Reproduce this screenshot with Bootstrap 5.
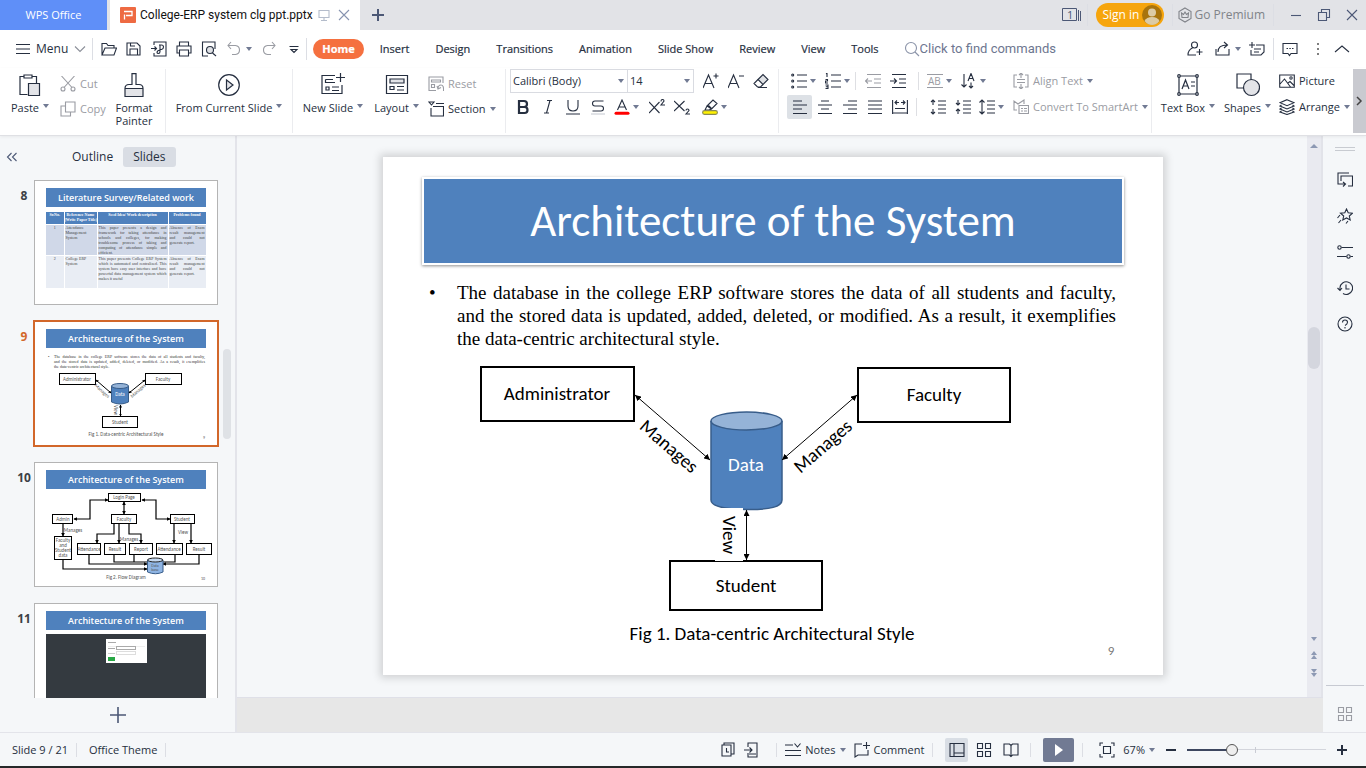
<!DOCTYPE html>
<html lang="en">
<head>
<meta charset="utf-8">
<meta name="viewport" content="width=device-width, initial-scale=1">
<title>College-ERP system clg ppt.pptx - WPS Office</title>
<link rel="stylesheet" href="https://cdn.jsdelivr.net/npm/bootstrap@5.3.0/dist/css/bootstrap.min.css">
<style>
:root{--ink:#262f40;--ink-soft:#9a9ca3;--line:#e3e4ea;--panel:#f5f7f9;--accent:#f5703f;--slide-blue:#4f81bd}
body{font:11px/16px "Open Sans","Noto Sans",sans-serif;color:var(--ink);background:var(--panel)}
button{font:inherit;color:inherit;background:none;border:0;padding:0}
svg{display:block;flex:none}
.ic{width:16px;height:16px;fill:none;stroke:currentColor;stroke-width:1.1}
.ic24{width:24px;height:24px;fill:none;stroke:currentColor;stroke-width:1.2}
.caret{width:0;height:0;flex:none;border:3px solid transparent;border-top:4px solid #717a93;border-bottom:0}
.muted-tool{color:var(--ink-soft)}
.soft{color:#4c5876}
.vline{width:1px;background:#dcdee4;flex:none}

.titlebar{height:30px;background:#e2e3e7}
.home-tab{width:107px;background:#5f8ff8;color:#fff}
.doc-tab{width:250px;margin-left:3px;background:#fff;padding:0 8px 0 10px;font:12px/16px Roboto,sans-serif;color:#111}
.new-tab{width:35px}
.signin{height:24px;border-radius:12px;background:#f6a50d;color:#fff;font-size:12px;padding:0 2px 0 6px;gap:3px}
.premium{font-size:12px;color:#808389;gap:1px}
.winbtn{width:28px;height:30px}

.menurow{height:38px;background:#fff}
.qat{gap:9px}
.menurow .vline,.titlebar .vline{height:22px}
.maintabs{margin-left:6px}
.maintabs a{color:var(--ink);text-decoration:none;padding:2px 13px;-webkit-text-stroke:.2px}
.maintabs a.active{background:var(--accent);color:#fff;font-weight:700;border-radius:10px;padding:2px 9px;margin-right:3px}
.findwrap{margin-left:12px}
.findbox{font:13px/18px Roboto,sans-serif;border:0;outline:0;width:160px;padding:0;color:#6d7690}
.findbox::placeholder{color:#6d7690;opacity:1}

.ribbon{height:68px;background:#fff;border-bottom:1px solid #dfe0e4;box-shadow:0 1px 3px #0000000f;position:relative;padding-top:1px}
.ribbon>.vline{height:64px;background:#ebecef}
.big{display:flex;flex-direction:column;align-items:center;gap:4px;padding-top:4px;line-height:13px}
.big .caption-row{display:flex;gap:4px;white-space:nowrap}
.big .caret{margin-top:3px}
.stack{padding-top:2px}
.stack button{display:flex;align-items:center;gap:4px;height:25px;white-space:nowrap}
.tools{gap:2px}
.tools>div{display:flex;align-items:center;height:24px}
.tb{width:25px;height:24px;display:flex;align-items:center;justify-content:center}
.tb.drop{width:34px;justify-content:flex-start;gap:3px;padding-left:4px}
.tb.on{background:#dde1e6;border-radius:2px}
.tools .vline{height:18px;background:#dedfe3}
.fontsel{height:24px;border:1px solid #d9dbe1;border-radius:0;background:#fff url("data:image/svg+xml,%3Csvg xmlns='http://www.w3.org/2000/svg' width='6' height='4'%3E%3Cpath d='M0 0h6L3 4z' fill='%23717a93'/%3E%3C/svg%3E") no-repeat right 3px center;appearance:none;font:inherit;color:var(--ink);padding:0 2px}
.fname{width:118px}.fsize{width:67px;margin-left:-1px}
.more{width:13px;height:64px;background:#c9cad0}

.side{width:237px;border-right:2px solid var(--line)}
.side-head{height:41px;font-size:12px}
.segs{margin-left:42px}
.seg{padding:2px 10px;border-radius:3px;line-height:16px}
.seg.on{background:#d9dde4;min-width:50px}
.thumbs{overflow:hidden;position:relative;padding-top:3px}
.thumb-row{display:flex;margin-bottom:16px;padding-left:14px}
.thumb-no{width:20px;padding-top:8px;text-align:center;font-weight:700;font-size:12px;color:#3c3f45}
.thumb{width:184px;height:125px;border:1px solid #b4b4b4;background:#fff;overflow:hidden;flex:none;font-family:Carlito,"Open Sans",sans-serif}
.picked .thumb{outline:2px solid #d2672a;outline-offset:-1px;border-color:#fff}
.picked .thumb-no{color:#d2672a}
.thumb h3{margin:7px 11px 0;height:19px;background:var(--slide-blue);color:#fff;font:600 9px/20px "Open Sans",sans-serif;text-align:center;white-space:nowrap}
.thumb svg text{text-anchor:middle;fill:#555;stroke:none}
.mini{margin:5px 11px 0;width:160px;border-collapse:collapse;table-layout:fixed;font:4px/5px "Liberation Serif",serif;color:#444}
.mini th,.mini td{border:1px solid #fff;border-width:0 1px 1px 0;padding:0 1px;vertical-align:top;text-align:justify}
.mini th{background:var(--slide-blue);color:#fff;text-align:center;height:12px;white-space:nowrap;padding:0}
.mini tr.a td{background:#d0d8e8;height:29px}.mini tr.b td{background:#e9edf4;height:33px}
.mini td:first-child{text-align:center}
.mini-text{margin:6px 12px 0 19px;font:4px/5px "Liberation Serif",serif;color:#333}
.mini-text div{text-align-last:justify}.mini-text div:last-child{text-align-last:left}
.mini-text::before{content:"•";position:absolute;margin-left:-6px}
.login-shot{margin:4px 11px 0;height:92px;background:#343a40;padding-top:5px}
.login-card{width:41px;height:24px;margin:auto;background:#fff;padding:2px}
.side-scroll{position:absolute;right:4px;top:172px;width:8px;height:90px;border-radius:4px;background:#dfe2e6}
.add{height:34px}

.stage{padding:21px 16px 0 18px}
.slide{width:100%;max-width:780px;background:#fff;box-shadow:0 0 8px 3px #00000026;color:#000}
.slide-title{margin:20px 39px 0;border:2px solid #fff;background:var(--slide-blue);box-shadow:0 1px 3px #00000073;color:#fff;font:45px/84px Carlito,"Open Sans",sans-serif;text-align:center}
.slide-body{margin:16px 47px 10px 74px;font:19px/23px "Liberation Serif",serif;text-align:justify}
.slide-body::before{content:"•";position:absolute;margin-left:-28px}
.diagram{width:100%;height:auto;font:19px Carlito,"Open Sans",sans-serif}
.diagram text{text-anchor:middle}
.diagram .pg{font-size:13px;fill:#777}
.vscroll{width:16px;background:#e9eaf0;border-right:2px solid #e2e3e9;color:#8d99b3}
.vscroll i{display:block;width:12px;height:42px;border-radius:6px;background:#d4d6de}
.before-thumb{flex-grow:2}.after-thumb{flex-grow:3}
.notes{height:35px;background:#e7e7e7;border-top:1px solid #dfe0e8}
.rail{width:43px;gap:20px;padding:11px 0 10px}
.rail hr{width:38px;margin:0;border-color:#c7cad2;opacity:1}
.status{height:34px;border-top:1px solid var(--line);color:var(--ink)}
.status .vline{height:14px}
.status button{display:flex;align-items:center}
.vw{width:23px;height:24px;justify-content:center}
.vw.on{background:#d9dee5;border-radius:2px}
.play{width:31px;height:24px;background:#717a93!important;border-radius:2px;color:#fff;justify-content:center}
.zoombar{appearance:none;width:139px;height:14px;background:linear-gradient(#3d4760,#3d4760) 0 50%/44px 2px no-repeat,linear-gradient(#c9ccd4,#c9ccd4) 68px 50%/1px 6px no-repeat,linear-gradient(#d3d5dc,#d3d5dc) 0 50%/100% 1px no-repeat}
.zoombar::-webkit-slider-thumb{appearance:none;width:12px;height:12px;border:1px solid #555;border-radius:50%;background:#eee}
.edge{height:2px;background:#262829}
</style>
</head>
<body>
<svg width="0" height="0" class="position-absolute" aria-hidden="true">
<defs>
<symbol id="open" viewBox="0 0 16 16"><path d="M1 14V2.500h4.500l1.500 2h6V7M1 14l3-7h11.500l-2.500 7z"/></symbol>
<symbol id="save" viewBox="0 0 16 16"><path d="M1 14V2h10l3 3v9zM4 14V8h7.500v6M4.500 2v3H9"/></symbol>
<symbol id="pdf" viewBox="0 0 16 16"><path d="M3 4V1h12v14H3v-3M0 7.500h5M3.500 5.500l2 2-2 2M8 4h2.500q2 0 2 2t-2 2.500H9v2q0 2-1.500 2T6 11.500q0-2 3-2.500M9 4v5"/></symbol>
<symbol id="print" viewBox="0 0 16 16"><path d="M3.500 5V1h9v4M3.500 12H1V5h14v7h-2.500M3.500 9h9v6h-9z"/></symbol>
<symbol id="preview" viewBox="0 0 16 16"><path d="M7 15H1.500V1H14v7"/><circle cx="9" cy="9" r="3.500" fill="#dfe1e5"/><path d="m11.500 12 3.500 3"/></symbol>
<symbol id="undo" viewBox="0 0 16 16"><path d="M5 1 2 4.500 5 8M2 4.500h7.500q4 .5 4 4.500t-4 4.500H6"/></symbol>
<symbol id="redo" viewBox="0 0 16 16"><path d="m11 1 3 3.500L11 8m3-3.500H6.500q-4 .5-4 4.500t4 4.500H10"/></symbol>
<symbol id="search" viewBox="0 0 16 16"><circle cx="7" cy="7" r="5.500"/><path d="m11 11 4 4"/></symbol>
<symbol id="x" viewBox="0 0 16 16"><path d="m3 3 10 10M13 3 3 13"/></symbol>
<symbol id="plus" viewBox="0 0 16 16"><path d="M8 2v12M2 8h12" stroke-width="2"/></symbol>
<symbol id="minus" viewBox="0 0 16 16"><path d="M3 8h10" stroke-width="2"/></symbol>
<symbol id="down" viewBox="0 0 16 16"><path d="m3 5.500 5 5 5-5"/></symbol>
<symbol id="cut" viewBox="0 0 16 16"><circle cx="3" cy="13" r="2"/><circle cx="13" cy="13" r="2"/><path d="M1.500 0 12 11.500M14.500 0 4 11.500"/></symbol>
<symbol id="copy" viewBox="0 0 16 16"><path d="M5.500 1H15v10H5.500zM5.500 5H1v10h9.500v-4"/></symbol>
<symbol id="paste" viewBox="0 0 24 24"><path d="M9.500 21.500H2V3.500h4M14 3.500h4.500V10M6 2h8v3H6z"/><path d="M10.500 10.500h11v12h-11z" fill="#e3e4e8"/></symbol>
<symbol id="painter" viewBox="0 0 24 24"><path d="M3 15h18v8.500H3z" fill="#e3e4e8" stroke="none"/><path d="M3 15.500q0-4 4-4h3V.7h4v10.800h3q4 0 4 4v8H3zM3 15.500h18"/></symbol>
<symbol id="run" viewBox="0 0 24 24"><circle cx="12" cy="12" r="10.300"/><path d="m9.500 7 6.500 5-6.500 5z" fill="#e3e4e8"/></symbol>
<symbol id="newslide" viewBox="0 0 24 24"><path d="M14 2.500H1v18h20V12M19.500 0v9M15 4.500h9M4.500 6.500H12M4.500 6.500v3H14M5 14h3v3H5zM11 14h7M11 17.500h7"/></symbol>
<symbol id="layout" viewBox="0 0 24 24"><path d="M1.500 2.500h21v18h-21z"/><path d="M5 6h14v4H5z" fill="#e3e4e8"/><path d="M5 13.500h4v3H5zM12 13.500h7M12 17h7"/></symbol>
<symbol id="reset" viewBox="0 0 16 16"><path d="M8 14.500H1V1h14v6M3.500 4h9v2h-9zM3.500 8.500h3v3h-3zM9 10l1 3 3-1.500M10 13q0-4 3-4t2.500 6"/></symbol>
<symbol id="section" viewBox="0 0 16 16"><path d="M1 1h5L3.500 4zM8 2.500h8M3 7v8h12.500V5.500H5"/></symbol>
<symbol id="eraser" viewBox="0 0 16 16"><path d="M5 6.500 10 1.500l5 5-5 5z" fill="#dfe1e5"/><path d="M5 6.500 1 10.500 4.500 14h3l2.500-2.500M5 14.500h9"/></symbol>
<symbol id="hilite" viewBox="0 0 16 16"><path d="m5 7 6-6 4 3.500L9.500 10zM5 7l-2 4h4l2.500-1M6.500 6.500l3 3"/><rect x=".6" y="11.600" width="14.800" height="3.800" rx="1.900" fill="#fff200" stroke="#8a8a55"/></symbol>
<symbol id="bullets" viewBox="0 0 16 16"><path d="M6 2h10M6 8h10M6 14h10"/><circle cx="1.700" cy="2" r="1"/><circle cx="1.700" cy="8" r="1"/><circle cx="1.700" cy="14" r="1"/></symbol>
<symbol id="numbers" viewBox="0 0 16 16"><path d="M6 2h10M6 8h10M6 14h10M1 .800l1-.500V4M.500 6.500h2v1.500h-2V10h2.500M.500 12h2.500v3.500H.500M.800 13.800H3"/></symbol>
<symbol id="outdent" viewBox="0 0 16 16"><path d="M2 1.500h14M9 6h7M9 10h7M2 14.500h14M0 8h7M3 5.500.500 8 3 10.500"/></symbol>
<symbol id="indent" viewBox="0 0 16 16"><path d="M2 1.500h14M9 6h7M9 10h7M2 14.500h14M0 8h6M4 5.500 6.500 8 4 10.500"/></symbol>
<symbol id="sort" viewBox="0 0 16 16"><path d="M3 1v13M.500 11.500 3 14l2.500-2.500M7 8l3-7.500L13 8M8 5.500h4M10 9.500V15M8 13l2 2 2-2"/></symbol>
<symbol id="al" viewBox="0 0 16 16"><path d="M1 2h9M1 6h14M1 10h9M1 14.500h14"/></symbol>
<symbol id="ac" viewBox="0 0 16 16"><path d="M4 2h8M1 6h14M4 10h8M1 14.500h14"/></symbol>
<symbol id="ar" viewBox="0 0 16 16"><path d="M6 2h9M1 6h14M6 10h9M1 14.500h14"/></symbol>
<symbol id="aj" viewBox="0 0 16 16"><path d="M1 2h14M1 6h14M1 10h14M1 14.500h14"/></symbol>
<symbol id="ad" viewBox="0 0 16 16"><path d="M.6 1v14M15.400 1v14M3 9.500h10M1 14h14M3 3.500h4M9 3.500h4M5 1.500l-2 2 2 2M11 1.500l2 2-2 2"/></symbol>
<symbol id="ls1" viewBox="0 0 16 16"><path d="M8 2h8M8 6h8M8 10h8M8 14h8M3 1v5M3 10v5M1 3l2-2 2 2M1 13l2 2 2-2"/></symbol>
<symbol id="ls2" viewBox="0 0 16 16"><path d="M8 2h8M8 6h8M8 10h8M8 14h8M3 1v5M3 10v5M1 4l2 2 2-2M1 12l2-2 2 2"/></symbol>
<symbol id="ls3" viewBox="0 0 16 16"><path d="M8 2h8M8 6h8M8 10h8M8 14h8M3 1v14M.500 3.500 3 1l2.500 2.500M.500 12.500 3 15l2.500-2.500"/></symbol>
<symbol id="aligntext" viewBox="0 0 16 16"><path d="M4 2H1v12h3M12 2h3v12h-3M4 6.500h8M4 9.500h8M8 0v5M8 11v5M6 2l2-2 2 2M6 14l2 2 2-2"/></symbol>
<symbol id="smartart" viewBox="0 0 16 16"><path d="M4 11H1V2l4 3 6-4v4M6 6.500h9.500v8H6zM8 9.500h2M11 9.500h3M8 12h2M11 12h3"/></symbol>
<symbol id="textbox" viewBox="0 0 24 24"><path d="M3 3h18v18H3zM6 16l3.500-9 3.500 9M7.300 13h4.500M15 9h4M15 13h4"/><g fill="#fff"><circle cx="3" cy="3" r="1.300"/><circle cx="21" cy="3" r="1.300"/><circle cx="3" cy="21" r="1.300"/><circle cx="21" cy="21" r="1.300"/></g></symbol>
<symbol id="shapes" viewBox="0 0 24 24"><path d="M1 1h14v14H1z"/><circle cx="15.500" cy="14.500" r="8" fill="#e3e4e8"/></symbol>
<symbol id="picture" viewBox="0 0 16 16"><path d="M.7 2h14.600v12.300H.700zM1 11l4.500-5 6 8M9 10l2-1.500 4 4"/><circle cx="12" cy="5" r="1.200"/></symbol>
<symbol id="arrange" viewBox="0 0 16 16"><path d="m8 .7 7 3-7 3-7-3zM2.500 6 1 7l7 3 7-3-1.500-1M2.500 9 1 10l7 3 7-3-1.500-1M2.500 12 1 13l7 2.500 7-2.500-1.500-1"/></symbol>
<symbol id="person" viewBox="0 0 16 16"><circle cx="7.500" cy="4" r="3"/><path d="M5.500 7Q1 9 1 14h8M12.500 8v6M9.500 11h6"/></symbol>
<symbol id="share" viewBox="0 0 16 16"><path d="M1 8v6h13V8M3 11q0-7 9-7M9 1l3.500 3L9 7"/></symbol>
<symbol id="addnote" viewBox="0 0 16 16"><path d="M7 4h8v7l-3 3H2V9M0 4h6M3 1v6M5 8h7M5 11h5"/></symbol>
<symbol id="bubble" viewBox="0 0 16 16"><path d="M1 2.500h14v10H9l-1.500 2-1.500-2H1zM4.500 7.500H6M7.300 7.500h1.500M10 7.500h1.500"/></symbol>
<symbol id="cyl" viewBox="0 0 18 22"><path d="M.5 3v16q8.500 4 17 0V3" fill="#4f81bd" stroke="#385d8a"/><ellipse cx="9" cy="3" rx="8.500" ry="2.500" fill="#95b3d7" stroke="#385d8a"/></symbol>
<symbol id="grid4" viewBox="0 0 16 16"><path d="M1.500 1.500h5v5h-5zM9.500 1.500h5v5h-5zM1.500 9.500h5v5h-5zM9.500 9.500h5v5h-5z"/></symbol>
<marker id="arr" viewBox="0 0 6 6" refX="6" refY="3" markerWidth="6" markerHeight="6" orient="auto-start-reverse"><path d="M0 0 6 3 0 6z"/></marker>
<marker id="arrs" viewBox="0 0 6 6" refX="5" refY="3" markerWidth="3" markerHeight="3" orient="auto-start-reverse"><path d="M0 0 6 3 0 6z"/></marker>
</defs>
</svg>

<div class="d-flex flex-column vh-100 overflow-hidden">

<header class="titlebar d-flex align-items-center flex-shrink-0">
  <button class="home-tab h-100">WPS Office</button>
  <div class="doc-tab d-flex align-items-center h-100">
    <svg width="16" height="16" class="me-1"><rect width="16" height="16" rx="1" fill="#ee6a42"/><path d="M4 4.500h8v4H6M4.500 7.500v5" fill="none" stroke="#fff" stroke-width="1.300"/></svg>
    <span class="text-nowrap">College-ERP system clg ppt.pptx</span>
    <svg class="ic ms-auto" style="color:#b4bccb" viewBox="0 0 16 16"><path d="M3 3.500h10v7H3zM8 10.500v3M5 13.500h6"/></svg>
    <button class="ms-1" aria-label="Close tab"><svg class="ic" style="color:#8794b0"><use href="#x"/></svg></button>
  </div>
  <button class="new-tab d-flex justify-content-center soft" aria-label="New tab"><svg class="ic"><use href="#plus"/></svg></button>
  <button class="ms-auto soft" aria-label="Windows"><svg width="22" height="16" fill="none" stroke="currentColor"><path d="M1.500 1.500h14v12h-14zM17.500 3v11M19.500 4v10"/><text x="6" y="12" font-size="11" fill="currentColor" stroke="none">1</text></svg></button>
  <span class="vline ms-1 me-2"></span>
  <button class="signin d-flex align-items-center"><span>Sign in</span><svg width="20" height="20"><circle cx="10" cy="10" r="10" fill="#a8740d"/><circle cx="10" cy="7.500" r="4" fill="#dccba5"/><path d="M2.500 16q2-4 7.500-4t7.500 4q-3 4-7.500 4t-7.500-4z" fill="#dccba5"/></svg></button>
  <span class="vline ms-2 me-1"></span>
  <button class="premium d-flex align-items-center"><svg class="ic" viewBox="0 0 16 16"><path d="m8 1 6 3.500v7L8 15l-6-3.500v-7zM4.500 6l2 1.500L8 5l1.500 2.500 2-1.500-.5 4.500H5z"/></svg><span>Go Premium</span></button>
  <span class="vline ms-2"></span>
  <div class="d-flex soft ms-2">
    <button class="winbtn d-flex align-items-center justify-content-center" aria-label="Minimize"><svg class="ic" viewBox="0 0 16 16"><path d="M3 8.500h10"/></svg></button>
    <button class="winbtn d-flex align-items-center justify-content-center" aria-label="Restore"><svg class="ic" viewBox="0 0 16 16"><path d="M2.500 5.500h8v8h-8zM5.500 5V2.500h8v8H11"/></svg></button>
    <button class="winbtn d-flex align-items-center justify-content-center" aria-label="Close"><svg class="ic"><use href="#x"/></svg></button>
  </div>
</header>

<nav class="menurow d-flex align-items-center flex-shrink-0">
  <button class="d-flex align-items-center ps-3 pe-1 gap-1"><svg class="ic" viewBox="0 0 16 16"><path d="M0 3.500h14M0 8h14M0 12.500h14"/></svg><span style="font-size:12px">Menu</span><svg class="ic" style="color:#8b8f99"><use href="#down"/></svg></button>
  <span class="vline"></span>
  <div class="qat d-flex align-items-center ms-2">
    <button aria-label="Open"><svg class="ic"><use href="#open"/></svg></button>
    <button aria-label="Save"><svg class="ic"><use href="#save"/></svg></button>
    <button aria-label="Export to PDF"><svg class="ic"><use href="#pdf"/></svg></button>
    <button aria-label="Print"><svg class="ic"><use href="#print"/></svg></button>
    <button aria-label="Print preview"><svg class="ic"><use href="#preview"/></svg></button>
    <button class="d-flex align-items-center gap-1 muted-tool" aria-label="Undo"><svg class="ic"><use href="#undo"/></svg><span class="caret"></span></button>
    <button class="muted-tool" aria-label="Redo"><svg class="ic"><use href="#redo"/></svg></button>
    <button aria-label="Customize"><svg class="ic" viewBox="0 0 16 16"><path d="M3.500 5.500h9M5 8.500l3 3 3-3z"/></svg></button>
  </div>
  <span class="vline ms-1"></span>
  <div class="maintabs d-flex">
    <a class="active" href="#">Home</a><a href="#">Insert</a><a href="#">Design</a><a href="#">Transitions</a><a href="#">Animation</a><a href="#">Slide Show</a><a href="#">Review</a><a href="#">View</a><a href="#">Tools</a>
  </div>
  <label class="findwrap d-flex align-items-center"><svg class="ic" style="color:#8a93a8"><use href="#search"/></svg><input class="findbox" type="text" placeholder="Click to find commands" aria-label="Click to find commands"></label>
  <div class="d-flex align-items-center ms-auto pe-3 gap-2">
    <button aria-label="Collaborate"><svg class="ic"><use href="#person"/></svg></button>
    <button class="d-flex align-items-center gap-1 ms-1" aria-label="Share"><svg class="ic"><use href="#share"/></svg><span class="caret"></span></button>
    <button aria-label="Add note"><svg class="ic"><use href="#addnote"/></svg></button>
    <span class="vline"></span>
    <button aria-label="Comments"><svg class="ic"><use href="#bubble"/></svg></button>
    <button class="ms-1" aria-label="More"><svg class="ic" viewBox="0 0 16 16" style="fill:#555;stroke:none"><circle cx="8" cy="3" r="1"/><circle cx="8" cy="8" r="1"/><circle cx="8" cy="13" r="1"/></svg></button>
    <button aria-label="Collapse ribbon"><svg class="ic" viewBox="0 0 16 16"><path d="m1 11 7-6 7 6"/></svg></button>
  </div>
</nav>

<section class="ribbon d-flex flex-shrink-0">
  <div class="d-flex" style="width:165px">
    <button class="big" style="width:60px"><svg class="ic24"><use href="#paste"/></svg><span class="caption-row">Paste <span class="caret"></span></span></button>
    <div class="stack muted-tool" style="width:48px"><button><svg class="ic"><use href="#cut"/></svg>Cut</button><button><svg class="ic"><use href="#copy"/></svg>Copy</button></div>
    <button class="big" style="width:52px"><svg class="ic24"><use href="#painter"/></svg><span>Format<br>Painter</span></button>
  </div>
  <span class="vline"></span>
  <button class="big" style="width:126px"><svg class="ic24"><use href="#run"/></svg><span class="caption-row">From Current Slide <span class="caret"></span></span></button>
  <span class="vline"></span>
  <div class="d-flex" style="width:212px">
    <button class="big" style="width:80px"><svg class="ic24"><use href="#newslide"/></svg><span class="caption-row">New Slide <span class="caret"></span></span></button>
    <button class="big" style="width:47px"><svg class="ic24"><use href="#layout"/></svg><span class="caption-row">Layout <span class="caret"></span></span></button>
    <div class="stack ms-2"><button class="muted-tool"><svg class="ic"><use href="#reset"/></svg>Reset</button><button><svg class="ic"><use href="#section"/></svg>Section <span class="caret"></span></button></div>
  </div>
  <span class="vline"></span>
  <div class="tools d-flex flex-column ps-1" style="width:272px">
    <div><select class="fontsel fname" aria-label="Font"><option>Calibri (Body)</option></select><select class="fontsel fsize" aria-label="Font size"><option>14</option></select>
      <button class="tb ms-1" aria-label="Grow font"><svg class="ic" viewBox="0 0 16 16"><path d="M0 15 5.500 2 11 15M2 10.500h7M10.500 3h5M13 .500v5"/></svg></button><button class="tb" aria-label="Shrink font"><svg class="ic" viewBox="0 0 16 16"><path d="M0 15 5.500 2 11 15M2 10.500h7M11 3h5"/></svg></button><button class="tb" aria-label="Clear formatting"><svg class="ic"><use href="#eraser"/></svg></button></div>
    <div><button class="tb" aria-label="Bold"><svg class="ic" viewBox="0 0 16 16" style="stroke-width:2.200"><path d="M4 2h5q3 0 3 3T9 8H4zM4 8h5.500q3 0 3 3t-3 3H4z"/></svg></button><button class="tb" aria-label="Italic"><svg class="ic" viewBox="0 0 16 16"><path d="M7 1.500h5M4 14h5M10 1.500 6.500 14"/></svg></button><button class="tb" aria-label="Underline"><svg class="ic" viewBox="0 0 16 16"><path d="M3 1v6q0 5 5 5t5-5V1M1 15h14"/></svg></button><button class="tb" aria-label="Strikethrough"><svg class="ic" viewBox="0 0 16 16"><path d="M13.500 2H5Q2.500 2 2.500 4.500T5 7h6q2.500 0 2.500 2.500T11 12H2.500"/><path d="M1 15h14" stroke="#c9ccd3"/></svg></button><button class="tb drop" aria-label="Font color"><svg class="ic" viewBox="0 0 16 16"><path d="M3.500 11 8 1l4.500 10M5 8h6"/><path d="M2 14.200h12" stroke="#f00" stroke-width="3" stroke-linecap="round"/></svg><span class="caret"></span></button><button class="tb" aria-label="Superscript"><svg class="ic" viewBox="0 0 16 16"><path d="m0 3 10.500 11M10.500 3 0 14M12 2.500q0-2 1.500-2t1.500 1.500L12 6h4"/></svg></button><button class="tb" aria-label="Subscript"><svg class="ic" viewBox="0 0 16 16"><path d="m0 2 10.500 10M10.500 2 0 12M12 11.500q0-1.500 1.500-1.500t1.500 1.500L12 15h4"/></svg></button><button class="tb drop ms-1" aria-label="Highlight"><svg class="ic"><use href="#hilite"/></svg><span class="caret"></span></button></div>
  </div>
  <span class="vline"></span>
  <div class="d-flex" style="width:372px">
    <div class="tools d-flex flex-column ms-2">
      <div><button class="tb drop" aria-label="Bullets"><svg class="ic"><use href="#bullets"/></svg><span class="caret"></span></button><button class="tb drop" aria-label="Numbering"><svg class="ic"><use href="#numbers"/></svg><span class="caret"></span></button><span class="vline"></span><button class="tb ms-1 muted-tool" aria-label="Decrease indent"><svg class="ic"><use href="#outdent"/></svg></button><button class="tb" aria-label="Increase indent"><svg class="ic"><use href="#indent"/></svg></button><span class="vline ms-2 me-1"></span><button class="tb drop muted-tool" aria-label="Text direction"><svg class="ic" viewBox="0 0 16 16"><path d="M0 1.500h16M0 14.500h16"/><text x="1" y="12" font-size="10" fill="currentColor" stroke="none">AB</text></svg><span class="caret"></span></button><button class="tb drop" aria-label="Text order"><svg class="ic"><use href="#sort"/></svg><span class="caret"></span></button></div>
      <div><button class="tb on" aria-label="Align left"><svg class="ic"><use href="#al"/></svg></button><button class="tb" aria-label="Center"><svg class="ic"><use href="#ac"/></svg></button><button class="tb" aria-label="Align right"><svg class="ic"><use href="#ar"/></svg></button><button class="tb" aria-label="Justify"><svg class="ic"><use href="#aj"/></svg></button><button class="tb" aria-label="Distribute"><svg class="ic"><use href="#ad"/></svg></button><span class="vline ms-1 me-2"></span><button class="tb" aria-label="Increase spacing"><svg class="ic"><use href="#ls1"/></svg></button><button class="tb" aria-label="Decrease spacing"><svg class="ic"><use href="#ls2"/></svg></button><button class="tb drop" aria-label="Line spacing"><svg class="ic"><use href="#ls3"/></svg><span class="caret"></span></button></div>
    </div>
    <div class="tools d-flex flex-column muted-tool ms-1"><div><button class="d-flex align-items-center gap-1"><svg class="ic"><use href="#aligntext"/></svg>Align Text <span class="caret"></span></button></div><div><button class="d-flex align-items-center gap-1 text-nowrap"><svg class="ic"><use href="#smartart"/></svg>Convert To SmartArt <span class="caret"></span></button></div></div>
  </div>
  <span class="vline"></span>
  <button class="big" style="width:72px"><svg class="ic24"><use href="#textbox"/></svg><span class="caption-row">Text Box <span class="caret"></span></span></button>
  <button class="big" style="width:47px"><svg class="ic24"><use href="#shapes"/></svg><span class="caption-row">Shapes <span class="caret"></span></span></button>
  <div class="tools d-flex flex-column ms-2"><div><button class="d-flex align-items-center gap-1"><svg class="ic"><use href="#picture"/></svg>Picture</button></div><div><button class="d-flex align-items-center gap-1"><svg class="ic"><use href="#arrange"/></svg>Arrange <span class="caret"></span></button></div></div>
  <button class="more ms-auto" aria-label="More tools"><svg width="13" height="16" fill="none" stroke="#444" stroke-width="1.500"><path d="m4 4 4 4-4 4"/></svg></button>
</section>

<main class="d-flex flex-grow-1" style="min-height:0">
  <aside class="side d-flex flex-column flex-shrink-0">
    <div class="side-head d-flex align-items-center ps-1 flex-shrink-0">
      <button class="soft" aria-label="Hide panel"><svg class="ic" viewBox="0 0 16 16"><path d="M7.500 4 3.500 8l4 4M12.500 4 8.500 8l4 4"/></svg></button>
      <div class="segs d-flex"><button class="seg">Outline</button><button class="seg on">Slides</button></div>
    </div>
    <div class="thumbs flex-grow-1">
      <div class="thumb-row"><div class="thumb-no">8</div><div class="thumb"><h3>Literature Survey/Related work</h3>
        <table class="mini"><colgroup><col style="width:18px"><col style="width:33px"><col style="width:71px"><col style="width:38px"></colgroup>
        <tr><th>Sr.No.</th><th>Reference Name<br>(Write Paper Title)</th><th>Seed Idea/ Work description</th><th>Problems found</th></tr>
        <tr class="a"><td>1</td><td>Attendance<br>Management<br>System</td><td>This paper presents a design and framework for taking attendance in schools and colleges, for making troublesome process of taking and computing of attendance simple and efficient.</td><td>Absence of Exam result management and could not generate report.</td></tr>
        <tr class="b"><td>2</td><td>College ERP<br>System</td><td>This paper presents College ERP System which is automated and centralized. This system have easy user interface and have powerful data management system which makes it useful</td><td>Absence of Exam result management and could not generate report.</td></tr></table></div></div>
      <div class="thumb-row picked"><div class="thumb-no">9</div><div class="thumb"><h3>Architecture of the System</h3>
        <div class="mini-text"><div>The database in the college ERP software stores the data of all students and faculty,</div><div>and the stored data is updated, added, deleted, or modified. As a result, it exemplifies</div><div>the data-centric architectural style.</div></div>
        <svg width="182" height="75" viewBox="1 48 182 75" font-size="5"><g fill="#fff" stroke="#000"><rect x="25.500" y="52.500" width="36" height="11"/><rect x="111.500" y="52.500" width="36" height="11"/><rect x="68.500" y="95.500" width="35" height="11"/></g><use href="#cyl" x="77" y="62" width="18" height="22"/><g stroke="#000"><path d="M62 59 77 72" marker-start="url(#arrs)" marker-end="url(#arrs)"/><path d="M95 72l16-13" marker-start="url(#arrs)" marker-end="url(#arrs)"/><path d="M86.500 84v11" marker-start="url(#arrs)" marker-end="url(#arrs)"/></g><text x="43" y="60">Administrator</text><text x="129" y="60">Faculty</text><text x="86" y="75" style="fill:#fff">Data</text><text x="86" y="103">Student</text><text transform="translate(67 71) rotate(42)">Manages</text><text transform="translate(105 71) rotate(-42)">Manages</text><text transform="translate(80 89) rotate(90)">View</text><text x="92" y="115">Fig 1. Data-centric Architectural Style</text><text x="170" y="118" font-size="4">9</text></svg></div></div>
      <div class="thumb-row"><div class="thumb-no">10</div><div class="thumb"><h3>Architecture of the System</h3>
        <svg width="182" height="96" viewBox="1 27 182 96" font-size="5"><g fill="none" stroke="#000" stroke-width="1.200"><path d="M40 57h16V38h18" marker-start="url(#arrs)" marker-end="url(#arrs)"/><path d="M108 38h14v19h14" marker-start="url(#arrs)" marker-end="url(#arrs)"/><path d="M90 40v12" marker-start="url(#arrs)" marker-end="url(#arrs)"/><path d="M29 62v12" marker-end="url(#arrs)"/><path d="M80 62v10H63v9" marker-end="url(#arrs)"/><path d="M85 62v19" marker-end="url(#arrs)"/><path d="M95 62v10h12v9" marker-end="url(#arrs)"/><path d="M140 62v19" marker-end="url(#arrs)"/><path d="M157 62v19" marker-end="url(#arrs)"/><path d="M55 93v9h58" marker-end="url(#arrs)"/><path d="M80 93v7h33M100 93v7"/><path d="M141 93v7h-12"/><path d="M165 93v9h-36" marker-end="url(#arrs)"/><path d="M29 98v9h84" marker-end="url(#arrs)"/></g><g fill="#fff" stroke="#000"><rect x="74.500" y="31.500" width="32" height="8"/><rect x="18.500" y="52.500" width="20" height="9"/><rect x="77.500" y="52.500" width="25" height="9"/><rect x="136.500" y="52.500" width="24" height="9"/><rect x="20.500" y="74.500" width="17" height="23"/><rect x="43.500" y="81.500" width="23" height="11"/><rect x="70.500" y="81.500" width="21" height="11"/><rect x="95.500" y="81.500" width="23" height="11"/><rect x="122.500" y="81.500" width="26" height="11"/><rect x="152.500" y="81.500" width="25" height="11"/></g><path d="M113.500 98v12q8 3.500 15.500 0V98z" fill="#8eb4e3" stroke="#385d8a"/><ellipse cx="121.200" cy="98" rx="7.700" ry="2" fill="#c6d9f1" stroke="#222"/><text x="90" y="37">Login Page</text><text x="29" y="59">Admin</text><text x="90" y="59">Faculty</text><text x="148" y="59">Student</text><text x="39" y="70">Manages</text><text x="95" y="79">Manages</text><text x="149" y="72">View</text><text x="29" y="80">Faculty</text><text x="29" y="85">and</text><text x="29" y="90">Student</text><text x="29" y="95">data</text><text x="55" y="89">Attendance</text><text x="81" y="89">Result</text><text x="107" y="89">Report</text><text x="135" y="89">Attendance</text><text x="165" y="89">Result</text><text x="121" y="105" font-size="4">Data</text><text x="121" y="109" font-size="4">base</text><text x="92" y="117">Fig 2. Flow Diagram</text><text x="169" y="118" font-size="4">10</text></svg></div></div>
      <div class="thumb-row"><div class="thumb-no">11</div><div class="thumb"><h3>Architecture of the System</h3>
        <div class="login-shot"><div class="login-card"><svg width="37" height="20"><rect y="5" width="37" height="0.500" fill="#ddd"/><rect x="8.500" y="5.500" width="19" height="3" fill="none" stroke="#aaa"/><rect x="8.500" y="10.500" width="19" height="3" fill="none" stroke="#ddd"/><rect y="16" width="7" height="4" fill="#28a745"/><rect y="1" width="8" height="1" fill="#aaa"/><rect y="7" width="7" height="1" fill="#aaa"/><rect y="12" width="7" height="1" fill="#ccc"/></svg></div></div></div></div>
      <div class="side-scroll"></div>
    </div>
    <div class="add d-flex justify-content-center align-items-center flex-shrink-0 soft"><button aria-label="Add slide"><svg class="ic" viewBox="0 0 16 16"><path d="M8 0v16M0 8h16" stroke-width="1.600"/></svg></button></div>
  </aside>

  <div class="d-flex flex-column flex-grow-1" style="min-width:0">
    <div class="d-flex flex-grow-1" style="min-height:0">
      <div class="stage flex-grow-1 d-flex justify-content-center align-items-start">
        <article class="slide d-flex flex-column">
          <h1 class="slide-title">Architecture of the System</h1>
          <p class="slide-body">The database in the college ERP software stores the data of all students and faculty, and the stored data is updated, added, deleted, or modified. As a result, it exemplifies the data-centric architectural style.</p>
          <svg class="diagram" viewBox="0 0 780 315">
            <g fill="#fff" stroke="#000" stroke-width="2"><rect x="98" y="7" width="153" height="54"/><rect x="475" y="8" width="152" height="54"/><rect x="287" y="201" width="152" height="49"/></g>
            <path d="M328 61v79q0 9 35.500 9.500t35.500-9.500V61" fill="#4f81bd" stroke="#385d8a" stroke-width="1.500"/><ellipse cx="363.500" cy="61" rx="35.500" ry="9" fill="#95b3d7" stroke="#385d8a" stroke-width="1.500"/>
            <path d="M332 148h28v53h-28z" fill="#fff"/>
            <g stroke="#000"><path d="M252 35l75 65" marker-start="url(#arr)" marker-end="url(#arr)"/><path d="M399 100l75-65" marker-start="url(#arr)" marker-end="url(#arr)"/><path d="M363.500 150v50" marker-start="url(#arr)" marker-end="url(#arr)"/></g>
            <text x="174" y="40">Administrator</text><text x="551" y="41">Faculty</text><text x="363" y="111" fill="#fff">Data</text><text x="363" y="232">Student</text>
            <text transform="translate(282 91) rotate(41)">Manages</text><text transform="translate(444 91) rotate(-41)">Manages</text><text transform="translate(340 175) rotate(90)">View</text>
            <text x="389" y="280">Fig 1. Data-centric Architectural Style</text><text class="pg" x="728" y="295">9</text>
          </svg>
        </article>
      </div>
      <div class="vscroll d-flex flex-column align-items-center">
        <svg width="8" height="4" class="mt-2"><path d="M0 4h8L4 0z" fill="currentColor"/></svg>
        <span class="before-thumb"></span><i></i><span class="after-thumb"></span>
        <svg width="8" height="44" fill="currentColor" class="mb-3"><path d="M1 0h6L4 4zM1 18l3-4 3 4zM1 22l3-4 3 4zM1 32h6l-3 4zM1 36h6l-3 4z"/></svg>
      </div>
    </div>
    <div class="notes flex-shrink-0"></div>
  </div>

  <aside class="rail d-flex flex-column align-items-center">
    <svg width="20" height="5" stroke="#c8cbd1"><path d="M0 .500h20M0 3.500h20"/></svg>
    <button aria-label="Slide transition"><svg class="ic" viewBox="0 0 16 16"><path d="M12 1H1v11h7M6 10l2.500 2L6 14.500M4 9V4h11.500v10H11"/></svg></button>
    <button aria-label="Animation"><svg class="ic" viewBox="0 0 16 16"><path d="m9.500 1 1.700 3.700 4.300.5-3.200 2.800.9 4-3.700-2-3.700 2 .9-4L3.500 5.200l4.300-.5zM3 7 .500 10M4 12l-2.500 3M11 13l-2 2.500"/></svg></button>
    <button aria-label="Object properties"><svg class="ic" viewBox="0 0 16 16"><circle cx="2.500" cy="3.500" r="1.700"/><circle cx="11.500" cy="12.500" r="1.700"/><path d="M4.500 3.500H16M0 12.500h9.500M13.500 12.500H16"/></svg></button>
    <button aria-label="History"><svg class="ic" viewBox="0 0 16 16"><path d="M3 9.500V7.500a6.300 6.300 0 1 1 3 6M.500 8 3 10.500 5 8M9 4.500V9h3.500"/></svg></button>
    <button aria-label="Help"><svg class="ic" viewBox="0 0 16 16"><circle cx="8" cy="8" r="7"/><path d="M5.500 6.500q0-2.500 2.500-2.500t2.500 2.200Q10.500 8 8 9.500M8 11v1.500"/></svg></button>
    <hr class="mt-auto"><button class="muted-tool" aria-label="More panels"><svg class="ic"><use href="#grid4"/></svg></button>
  </aside>
</main>

<footer class="status d-flex align-items-center flex-shrink-0">
  <span class="ps-2 ms-1">Slide 9 / 21</span><span class="vline ms-2"></span><span class="mx-2 ps-1">Office Theme</span><span class="vline"></span>
  <div class="d-flex align-items-center ms-auto">
    <button aria-label="Backup"><svg class="ic" viewBox="0 0 16 16"><path d="M2 3h9v11H2zM4 3V1h10v11h-3M6.500 6v4H9"/></svg></button>
    <button class="ms-2 me-2" aria-label="Send to phone"><svg class="ic" viewBox="0 0 16 16"><path d="M4 5V1h9v14H4v-4M0 8h8M5.500 5.500 8 8l-2.500 2.500M5 12h7"/></svg></button>
    <span class="vline mx-2"></span>
    <button><svg class="ic" viewBox="0 0 16 16"><path d="M0 3h8M0 8.500h16M0 13.500h16M9.500 1.500l3 3.500 3-3.500"/></svg><span class="ms-1">Notes</span><span class="caret ms-1"></span></button>
    <button class="ms-2"><svg class="ic" viewBox="0 0 16 16"><path d="M8 2H1v13l3-2h10V8M12.500 0v7M9 3.500h7"/></svg><span class="ms-1">Comment</span></button>
    <span class="vline ms-2 me-2"></span>
    <button class="vw on ms-1" aria-label="Normal view"><svg class="ic" viewBox="0 0 16 16"><path d="M1 1.500h14v13H1zM5 1.500v13M5 11h10"/></svg></button>
    <button class="vw ms-1" aria-label="Sorter view"><svg class="ic"><use href="#grid4"/></svg></button>
    <button class="vw ms-1" aria-label="Reading view"><svg class="ic" viewBox="0 0 16 16"><path d="M8 14.500 6.500 13H1V2h5.500L8 3.500 9.500 2H15v11H9.500zM8 3.500v11"/></svg></button>
    <span class="vline mx-2"></span>
    <button class="play ms-1" aria-label="Play"><svg width="12" height="14"><path d="M2 1v12l8-6z" fill="#fff"/></svg></button>
    <span class="vline mx-2"></span>
    <button class="ms-2" aria-label="Fit"><svg class="ic" viewBox="0 0 16 16"><path d="M1 4V1h3M12 1h3v3M15 12v3h-3M4 15H1v-3M4.500 4.500h7v7h-7z"/></svg></button>
    <button class="ms-2">67%<span class="caret ms-1"></span></button>
    <button class="ms-2" aria-label="Zoom out"><svg class="ic"><use href="#minus"/></svg></button>
    <input type="range" class="zoombar mx-2" min="0" max="100" value="31" aria-label="Zoom">
    <button class="me-3" aria-label="Zoom in"><svg class="ic" viewBox="0 0 16 16"><path d="M8 3v10M3 8h10" stroke-width="2"/></svg></button>
  </div>
</footer>
<div class="edge flex-shrink-0"></div>
</div>
<script src="https://cdn.jsdelivr.net/npm/bootstrap@5.3.0/dist/js/bootstrap.bundle.min.js"></script>
</body>
</html>
